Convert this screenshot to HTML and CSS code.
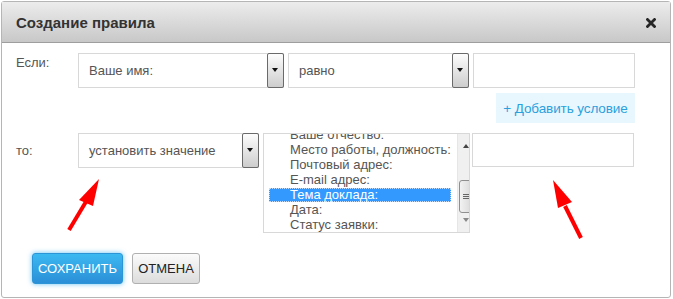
FILE: index.html
```html
<!DOCTYPE html>
<html>
<head>
  <meta charset="utf-8">
  <title>Создание правила</title>
  <link rel="stylesheet" href="styles.css">
</head>
<body>
  <div class="dialog">
    <div class="dialog-header">
      <h1>Создание правила</h1>
      <span class="close-btn">
        <svg width="10" height="10" viewBox="0 0 10 10"><path d="M1.5 1.5 L8.5 8.5 M8.5 1.5 L1.5 8.5" stroke="#262626" stroke-width="2.8" stroke-linecap="square"/></svg>
      </span>
    </div>

    <div class="dialog-body">
      <div class="rule-row">
        <label class="row-label">Если:</label>
        <div class="select select-field">
          <span class="select-text">Ваше имя:</span>
          <span class="select-arrow"></span>
        </div>
        <div class="select select-op">
          <span class="select-text">равно</span>
          <span class="select-arrow"></span>
        </div>
        <input type="text" class="text-input">
      </div>

      <div class="add-row">
        <button class="add-condition">+ Добавить условие</button>
      </div>

      <div class="rule-row then-row">
        <label class="row-label">то:</label>
        <div class="select select-action">
          <span class="select-text">установить значение</span>
          <span class="select-arrow"></span>
        </div>
        <div class="listbox">
          <ul class="listbox-items">
            <li>Ваше отчество:</li>
            <li>Место работы, должность:</li>
            <li>Почтовый адрес:</li>
            <li>E-mail адрес:</li>
            <li class="selected">Тема доклада:</li>
            <li>Дата:</li>
            <li>Статус заявки:</li>
          </ul>
          <div class="scrollbar">
            <span class="scroll-up"></span>
            <span class="scroll-thumb"><i></i><i></i><i></i></span>
            <span class="scroll-down"></span>
          </div>
        </div>
        <input type="text" class="text-input value-input">
      </div>

      <div class="dialog-footer">
        <button class="btn btn-save">Сохранить</button>
        <button class="btn btn-cancel">Отмена</button>
      </div>
    </div>

    <!-- annotation arrows -->
    <svg class="hint-arrow arrow-left" width="40" height="60" viewBox="0 0 40 60">
      <line x1="6" y1="56" x2="24" y2="26" stroke="#ff0000" stroke-width="4"/>
      <polygon points="36,5 16,26 30,32" fill="#ff0000"/>
    </svg>
    <svg class="hint-arrow arrow-right" width="40" height="66" viewBox="0 0 40 66">
      <line x1="33" y1="62" x2="17" y2="30" stroke="#ff0000" stroke-width="4"/>
      <polygon points="5,4 10,32 24,26" fill="#ff0000"/>
    </svg>
  </div>
</body>
</html>
```

FILE: styles.css
```css
body {
  margin: 0;
  padding: 0;
  font-family: 'Liberation Sans', Arial, sans-serif;
  background-color: #fff;
}

.dialog {
  position: relative;
  box-sizing: border-box;
  width: 670px;
  height: 297px;
  margin: 1px 0 0 1px;
  border: 1px solid #b5b5b5;
  border-radius: 3px;
  background-color: #fff;
}

.dialog-header {
  display: flex;
  justify-content: space-between;
  align-items: center;
  height: 40px;
  padding: 0 14px 0 14px;
  background: linear-gradient(#ececec, #c8c8c8);
  border-bottom: 1px solid #9e9e9e;
}

.dialog-header h1 {
  margin: 0;
  font-size: 15px;
  font-weight: bold;
  color: #333;
}

.close-btn {
  display: flex;
  margin-top: 1px;
}

.dialog-body {
  padding: 10px 35px 0 14px;
}

.rule-row {
  display: flex;
  align-items: flex-start;
}

.row-label {
  width: 62px;
  padding-top: 2px;
  font-size: 13px;
  color: #555;
}

.then-row .row-label {
  padding-top: 10px;
}

.select {
  position: relative;
  box-sizing: border-box;
  display: flex;
  align-items: center;
  height: 35px;
  margin-right: 4px;
  padding-left: 10px;
  border: 1px solid #d8d8d8;
  background-color: #fff;
}

.select-field {
  width: 206px;
}

.select-op {
  width: 181px;
}

.select-action {
  width: 181px;
}

.select-text {
  flex: 1;
  font-size: 13px;
  color: #555;
}

.select-arrow {
  position: relative;
  box-sizing: border-box;
  width: 17px;
  height: 35px;
  margin: -1px -1px -1px 0;
  border: 1px solid #6a6a6a;
  border-radius: 2px;
  background: linear-gradient(#fdfdfd, #cdcdcd);
}

.select-arrow::after {
  content: "";
  position: absolute;
  left: 4px;
  top: 14px;
  border-left: 3.5px solid transparent;
  border-right: 3.5px solid transparent;
  border-top: 4px solid #111;
}

.text-input {
  box-sizing: border-box;
  width: 162px;
  height: 35px;
  margin: 0;
  border: 1px solid #d8d8d8;
  outline: none;
}

.value-input {
  height: 34px;
  margin-left: -1px;
}

.add-row {
  display: flex;
  justify-content: flex-end;
  margin: 5px 0 10px;
}

.add-condition {
  width: 139px;
  height: 30px;
  padding: 0;
  border: none;
  background-color: #e8f6fd;
  color: #2aa1dd;
  font-family: inherit;
  font-size: 13.5px;
  letter-spacing: -0.1px;
}

.listbox {
  position: relative;
  box-sizing: border-box;
  width: 207px;
  height: 100px;
  border: 1px solid #d8d8d8;
  overflow: hidden;
  display: flex;
}

.listbox-items {
  flex: 1;
  margin: -7px 0 0 0;
  padding: 0 6px 0 5px;
  list-style: none;
  font-size: 13px;
  color: #555;
}

.listbox-items li {
  height: 15px;
  line-height: 15px;
  padding-left: 21px;
  white-space: nowrap;
}

.listbox-items li.selected {
  box-sizing: border-box;
  height: 14px;
  margin: 0.5px 0;
  line-height: 12px;
  padding-left: 20px;
  background-color: #3399ff;
  border: 1px dotted #c2defb;
  color: #fff;
}

.scrollbar {
  position: relative;
  width: 17px;
  background-color: #f0f0f0;
  border-left: 1px solid #e6e6e6;
}

.scroll-up,
.scroll-down {
  position: absolute;
  left: 5px;
  border-left: 3.5px solid transparent;
  border-right: 3.5px solid transparent;
}

.scroll-up {
  top: 10px;
  border-bottom: 4px solid #444;
}

.scroll-down {
  bottom: 10px;
  border-top: 4px solid #888;
}

.scroll-thumb {
  position: absolute;
  left: 1px;
  top: 46px;
  box-sizing: border-box;
  width: 15px;
  height: 33px;
  border: 1px solid #8f8f8f;
  border-radius: 3px;
  background: linear-gradient(to right, #f2f2f2, #d6d6d6);
  display: flex;
  flex-direction: column;
  align-items: center;
  justify-content: center;
  gap: 1px;
}

.scroll-thumb i {
  display: block;
  width: 7px;
  height: 1px;
  background-color: #666;
}

.then-row .listbox {
  margin-right: 3px;
}

.dialog-footer {
  display: flex;
  gap: 9px;
  margin-top: 20px;
  padding-left: 16px;
}

.btn {
  box-sizing: border-box;
  height: 31px;
  padding: 0;
  border-radius: 3px;
  font-family: inherit;
  font-size: 13px;
  text-transform: uppercase;
  cursor: pointer;
}

.btn-save {
  width: 91px;
  border: 1px solid #2b95d8;
  background: linear-gradient(#3cb9f1, #2a8fd7);
  box-shadow: 0 0 5px rgba(40, 170, 240, 0.7);
  color: #fff;
}

.btn-cancel {
  width: 68px;
  border: 1px solid #b0b0b0;
  background: linear-gradient(#fbfbfb, #dcdcdc);
  color: #222;
}

.hint-arrow {
  position: absolute;
}

.arrow-left {
  left: 61px;
  top: 172px;
}

.arrow-right {
  left: 546px;
  top: 174px;
}
```
